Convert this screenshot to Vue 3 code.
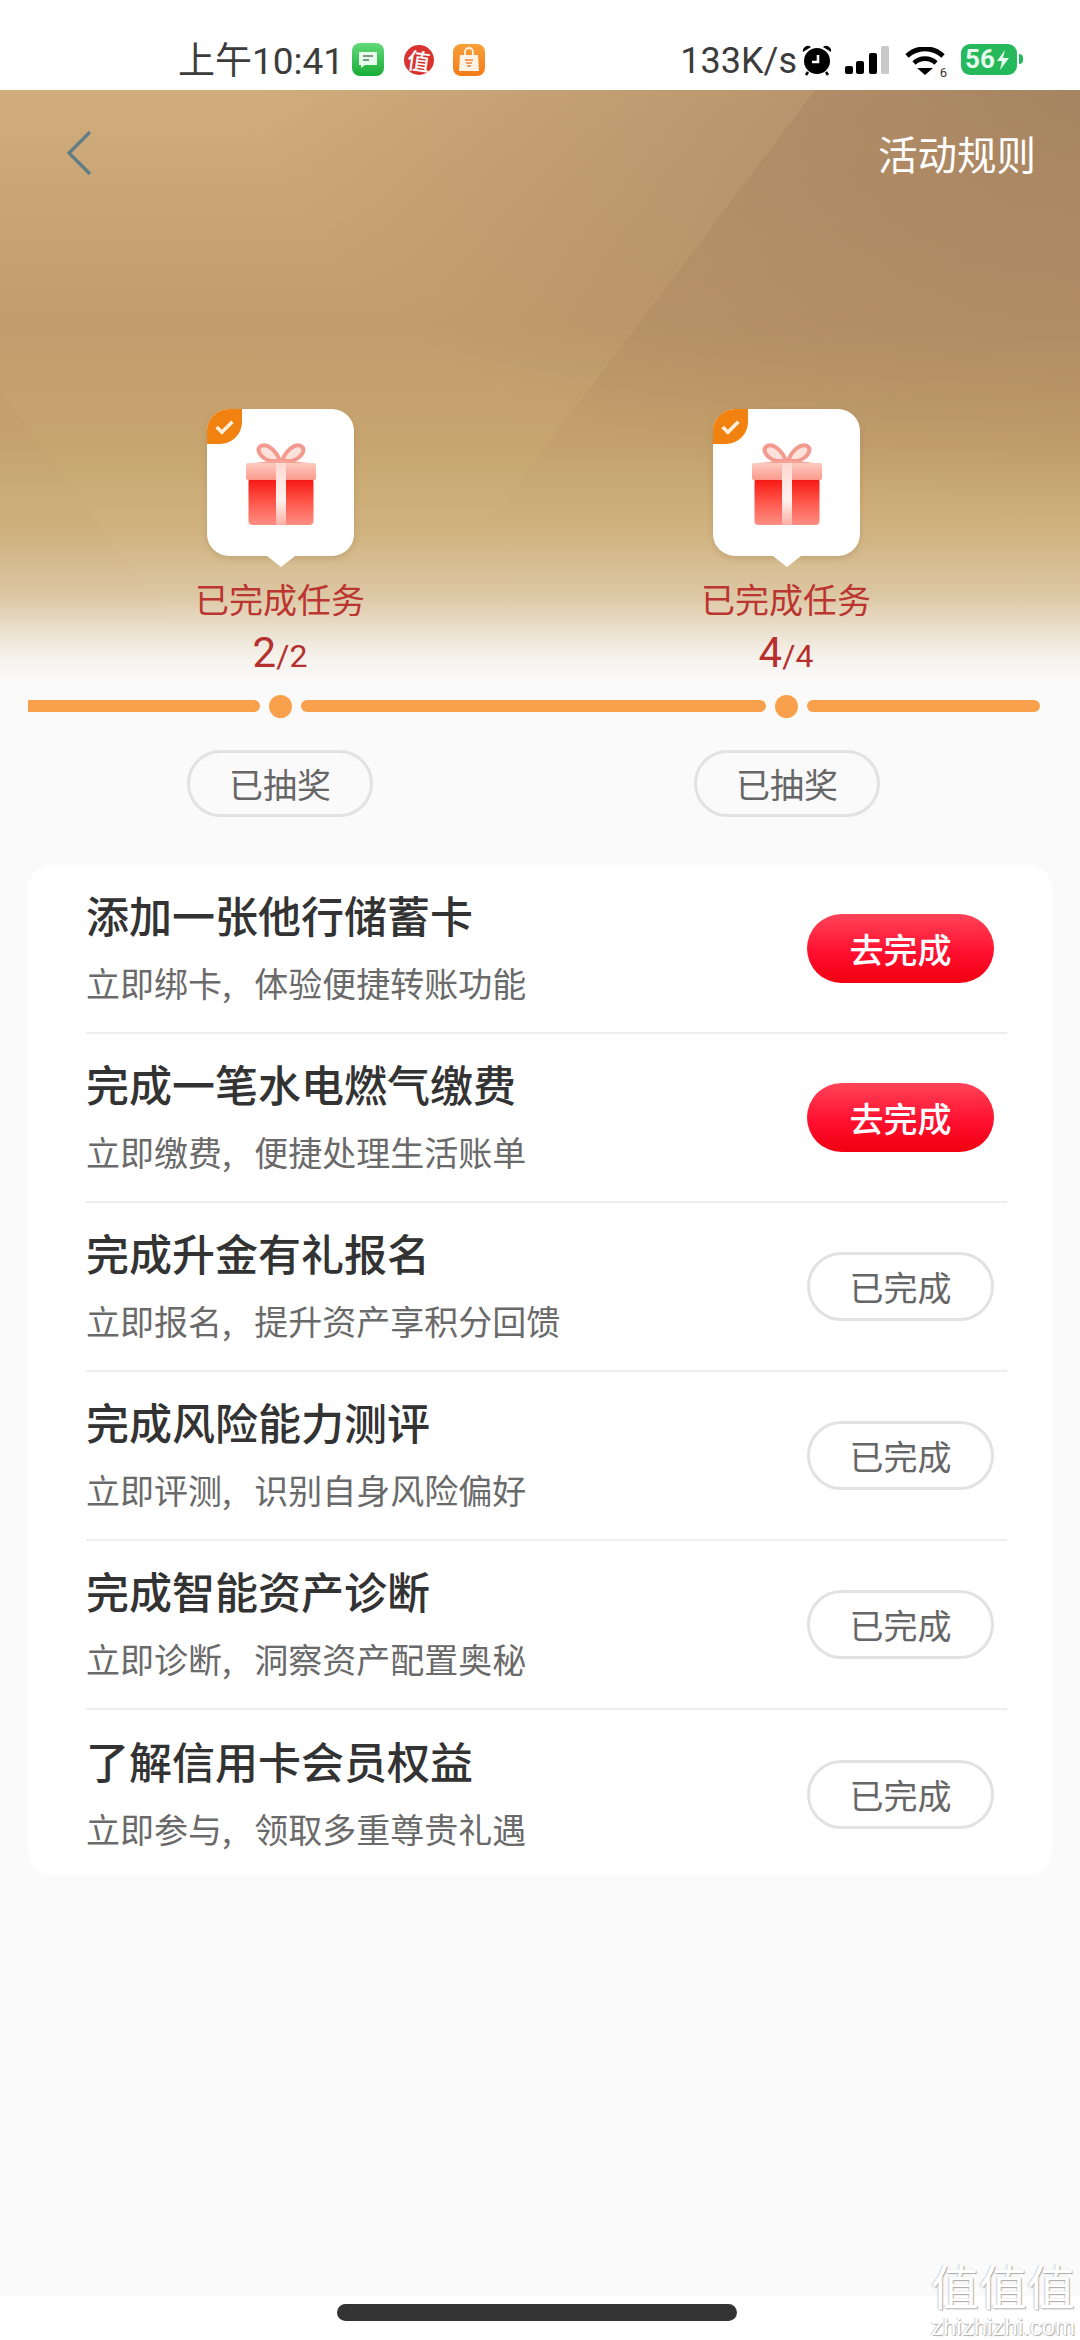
<script setup>
const milestones = [
  { done: '2', total: '2' },
  { done: '4', total: '4' },
]
const tasks = [
  { title: '添加一张他行储蓄卡', sub: '立即绑卡,   体验便捷转账功能', done: false },
  { title: '完成一笔水电燃气缴费', sub: '立即缴费,   便捷处理生活账单', done: false },
  { title: '完成升金有礼报名', sub: '立即报名,   提升资产享积分回馈', done: true },
  { title: '完成风险能力测评', sub: '立即评测,   识别自身风险偏好', done: true },
  { title: '完成智能资产诊断', sub: '立即诊断,   洞察资产配置奥秘', done: true },
  { title: '了解信用卡会员权益', sub: '立即参与,   领取多重尊贵礼遇', done: true },
]
</script>

<template>
  <div class="page">
    <header class="status">
      <div class="status-left">
        <span class="time">上午10:41</span>
        <svg class="ic-msg" width="32" height="33" viewBox="0 0 32 33">
          <defs>
            <linearGradient id="msgG" x1="0" y1="0" x2="0" y2="1">
              <stop offset="0" stop-color="#62d977" />
              <stop offset="1" stop-color="#18ad38" />
            </linearGradient>
          </defs>
          <rect width="32" height="33" rx="8" fill="url(#msgG)" />
          <path d="M7 9h18v13H13l-4 3v-3H7z" fill="#eafbee" />
          <path d="M11 13h10M11 17h6" stroke="#4d7f62" stroke-width="1.6" />
        </svg>
        <span class="zhi"><em>值</em></span>
        <svg class="ic-bag" width="32" height="32" viewBox="0 0 32 32">
          <defs>
            <linearGradient id="bagG" x1="0" y1="0" x2="0" y2="1">
              <stop offset="0" stop-color="#f8a13a" />
              <stop offset="1" stop-color="#f37a17" />
            </linearGradient>
          </defs>
          <rect width="32" height="32" rx="8" fill="url(#bagG)" />
          <path d="M7 11h18l1 16H6z" fill="#fdf3e4" />
          <path d="M12 12V8a4 4 0 0 1 8 0v4" fill="none" stroke="#fdf3e4" stroke-width="1.8" />
          <path d="M12 16h8M13 19h6M14 22h4" stroke="#e9823a" stroke-width="1.3" />
        </svg>
      </div>
      <div class="status-right">
        <span class="speed">133K/s</span>
        <svg class="ic-alarm" width="30" height="32" viewBox="0 0 30 32">
          <circle cx="15" cy="17" r="13" fill="#000" />
          <path d="M1 8a5 5 0 0 1 8-5zM29 8a5 5 0 0 0-8-5z" fill="#000" />
          <path d="M6 28l-2 3M24 28l2 3" stroke="#000" stroke-width="2.6" />
          <path d="M16 11v7H10" fill="none" stroke="#fff" stroke-width="2.6" />
        </svg>
        <svg class="ic-signal" width="44" height="28" viewBox="0 0 44 28">
          <rect x="0" y="20" width="8" height="8" rx="2" fill="#000" />
          <rect x="11" y="15" width="8" height="13" rx="2" fill="#000" />
          <rect x="24" y="7" width="8" height="21" rx="2" fill="#000" />
          <rect x="36" y="0" width="8" height="28" rx="1.5" fill="#c9c9c9" />
        </svg>
        <span class="wifi">
          <svg width="40" height="28" viewBox="0 0 40 28">
            <path d="M2 9a26 26 0 0 1 36 0" fill="none" stroke="#000" stroke-width="4.8" />
            <path d="M9 16a16 16 0 0 1 22 0" fill="none" stroke="#000" stroke-width="4.6" />
            <path d="M12 21h16l-8 7z" fill="#000" />
          </svg>
          <i class="wifi-six">6</i>
        </span>
        <span class="battery">
          <b>56</b>
          <svg width="12" height="20" viewBox="0 0 12 20"><path d="M8 0L0 11h5l-2 9 9-12H6z" fill="#e8fbee" /></svg>
          <i class="nub"></i>
        </span>
      </div>
    </header>

    <main class="main">
      <section class="hero">
        <div class="hero-bar">
          <svg class="back" width="26" height="46" viewBox="0 0 26 46">
            <path d="M24 2L3 23l21 21" fill="none" stroke="#5f7c88" stroke-width="3.2" />
          </svg>
          <span class="rules">活动规则</span>
        </div>
        <div class="miles">
          <div v-for="(m, i) in milestones" :key="i" class="mile">
            <div class="gift-card">
              <span class="check">
                <svg width="24" height="18" viewBox="0 0 24 18">
                  <path d="M3 9l6 6L21 3" fill="none" stroke="#fff0dd" stroke-width="4" />
                </svg>
              </span>
              <svg class="gift" width="70" height="83" viewBox="0 0 70 83">
                <defs>
                  <linearGradient :id="'lid' + i" x1="0" y1="0" x2="0" y2="1">
                    <stop offset="0" stop-color="#fccabf" />
                    <stop offset="1" stop-color="#fb9a8c" />
                  </linearGradient>
                  <linearGradient :id="'box' + i" x1="0" y1="0" x2="0" y2="1">
                    <stop offset="0" stop-color="#f5140f" />
                    <stop offset=".45" stop-color="#ff4f43" />
                    <stop offset="1" stop-color="#fd8f84" />
                  </linearGradient>
                  <linearGradient :id="'rib' + i" x1="0" y1="0" x2="0" y2="1">
                    <stop offset="0" stop-color="#fcd9d2" />
                    <stop offset=".6" stop-color="#fff1ee" />
                    <stop offset="1" stop-color="#fcaea4" />
                  </linearGradient>
                </defs>
                <path d="M34 18C30 7 21 0 15 3 10 6 13 14 24 18zM36 18C40 7 49 0 55 3c5 3 2 11-9 15z" fill="#fde2dc" stroke="#f39a8f" stroke-width="4" />
                <path d="M7 20l28-3 28 3z" fill="#f6a398" />
                <rect x="2.5" y="35" width="65" height="47" rx="4" :fill="'url(#box' + i + ')'" />
                <rect x="0" y="20" width="70" height="17" rx="2" :fill="'url(#lid' + i + ')'" />
                <rect x="30" y="20" width="10" height="62" :fill="'url(#rib' + i + ')'" />
              </svg>
            </div>
            <div class="mile-label">已完成任务</div>
            <div class="mile-count">{{ m.done }}<small>/{{ m.total }}</small></div>
          </div>
        </div>
      </section>

      <div class="track">
        <i class="seg seg-a"></i><i class="dot"></i>
        <i class="seg seg-b"></i><i class="dot"></i>
        <i class="seg seg-c"></i>
      </div>

      <div class="draws">
        <span v-for="i in 2" :key="i" class="pill draw">已抽奖</span>
      </div>

      <section class="card">
        <div v-for="t in tasks" :key="t.title" class="row">
          <div class="row-text">
            <div class="row-title">{{ t.title }}</div>
            <div class="row-sub">{{ t.sub }}</div>
          </div>
          <span v-if="t.done" class="pill task-done">已完成</span>
          <span v-else class="task-go">去完成</span>
        </div>
      </section>
    </main>

    <footer class="foot"><i class="home"></i></footer>

    <div class="mark">
      <div class="mark-zh">值值值</div>
      <div class="mark-en">zhizhizhi.com</div>
    </div>
  </div>
</template>

<style scoped>
.page {
  position: relative;
  width: 1080px;
  height: 2340px;
  display: flex;
  flex-direction: column;
  overflow: hidden;
  background: #fff;
  font-family: "Noto Sans CJK SC", "Noto Sans", sans-serif;
}
.status {
  height: 90px;
  box-sizing: border-box;
  padding: 43px 57px 0 178px;
  display: flex;
  justify-content: space-between;
  background: #fff;
}
.status-left,
.status-right {
  height: 33px;
  display: flex;
  align-items: center;
  color: #3c3c3c;
  font: 37px/33px Roboto, "Noto Sans CJK SC", sans-serif;
}
.time,
.speed { padding-top: 3px; }
.speed { font-size: 36px; }
.ic-msg { margin-left: 8px; }
.zhi {
  width: 30px;
  height: 30px;
  margin-left: 20px;
  border-radius: 50%;
  background: #d9322f;
  color: #fff;
  font: 500 23px/30px "Noto Sans CJK SC", sans-serif;
  text-align: center;
}
.zhi em {
  display: block;
  font-style: normal;
  transform: rotate(8deg);
}
.ic-bag { margin-left: 19px; }
.ic-alarm { margin-left: 5px; }
.ic-signal { margin-left: 13px; }
.wifi {
  position: relative;
  margin-left: 16px;
  width: 40px;
  height: 28px;
}
.wifi-six {
  position: absolute;
  right: -2px;
  bottom: -5px;
  font: 13px/13px Roboto, sans-serif;
  color: #333;
}
.battery {
  position: relative;
  width: 56px;
  height: 31px;
  margin: 0 6px 0 16px;
  box-sizing: border-box;
  padding-left: 4px;
  display: flex;
  align-items: center;
  gap: 2px;
  border-radius: 9px;
  background: #25b95c;
  color: #e8fbee;
}
.battery b { font: 700 26px/31px Roboto, sans-serif; }
.nub {
  position: absolute;
  right: -6px;
  top: 10px;
  width: 4px;
  height: 10px;
  border-radius: 0 4px 4px 0;
  background: #25b95c;
}

.main {
  flex: 1;
  background: #fafafa;
  display: flex;
  flex-direction: column;
}
.hero {
  position: relative;
  height: 590px;
  background:
    linear-gradient(180deg, rgba(250,250,250,0) 60%, rgba(250,250,250,.1) 75%, rgba(250,250,250,.35) 86%, rgba(250,250,250,.68) 92%, rgba(250,250,250,.88) 96%, #fafafa 100%),
    radial-gradient(ellipse 820px 430px at 100% 0, rgba(125,92,70,.42), rgba(125,92,70,0)),
    linear-gradient(180deg, #d1ac7d 0%, #c19d6e 40%, #caa96f 70%, #d0b27f 100%);
}
.hero::before {
  content: "";
  position: absolute;
  inset: 0;
  clip-path: polygon(815px 0, 1080px 0, 1080px 470px, 400px 550px);
  background: linear-gradient(180deg, rgba(150,115,85,.26) 0%, rgba(160,120,85,.14) 50%, rgba(170,130,85,0) 75%);
}
.hero::after {
  content: "";
  position: absolute;
  inset: 0;
  clip-path: polygon(0 300px, 170px 530px, 0 530px);
  background: linear-gradient(180deg, rgba(165,125,85,.12), rgba(165,125,85,0));
}
.hero-bar {
  position: relative;
  z-index: 1;
  height: 46px;
  padding: 40px 44px 0 66px;
  display: flex;
  justify-content: space-between;
  align-items: center;
}
.rules {
  color: #fff;
  font-size: 39.5px;
  line-height: 44px;
}
.miles {
  position: relative;
  z-index: 1;
  margin-top: 233px;
  padding-left: 130px;
  display: flex;
  gap: 206px;
}
.mile {
  width: 300px;
  display: flex;
  flex-direction: column;
  align-items: center;
}
.gift-card {
  position: relative;
  width: 147px;
  height: 147px;
  box-sizing: border-box;
  padding: 34px 0 0 39px;
  border-radius: 22px;
  background: #fff;
  box-shadow: 0 3px 6px rgba(130, 90, 40, .2);
}
.gift-card::after {
  content: "";
  position: absolute;
  left: 60px;
  top: 147px;
  border-left: 14px solid transparent;
  border-right: 14px solid transparent;
  border-top: 11px solid #fff;
}
.gift { display: block; }
.check {
  position: absolute;
  left: 0;
  top: 0;
  width: 35px;
  height: 35px;
  display: flex;
  align-items: center;
  justify-content: center;
  border-radius: 22px 0 22px 0;
  background: #f2820f;
}
.check svg { width: 21px; height: 16px; }
.mile-label {
  margin-top: 21px;
  color: #bb3531;
  font-size: 34px;
  line-height: 44px;
}
.mile-count {
  margin-top: 10px;
  color: #b5302e;
  font: 42px/44px Roboto, sans-serif;
}
.mile-count small { font-size: 32px; }

.track {
  margin-top: 14px;
  padding-left: 28px;
  height: 24px;
  display: flex;
  align-items: center;
  gap: 9px;
}
.seg {
  display: block;
  height: 12px;
  border-radius: 6px;
  background: #f9a04c;
}
.seg-a { width: 232px; border-radius: 0 6px 6px 0; }
.seg-b { width: 465px; }
.seg-c { width: 233px; }
.dot {
  display: block;
  width: 23px;
  height: 23px;
  border-radius: 50%;
  background: #f9a04c;
}

.draws {
  margin-top: 32px;
  padding-left: 187px;
  display: flex;
  gap: 321px;
}
.pill {
  box-sizing: border-box;
  display: flex;
  align-items: center;
  justify-content: center;
  border: 3px solid #e2e2e2;
  color: #666;
  font-size: 34px;
}
.draw {
  width: 186px;
  height: 67px;
  border-radius: 34px;
}

.card {
  margin: 48px 28px 0;
  height: 1010px;
  border-radius: 24px;
  background: #fff;
  overflow: hidden;
}
.row {
  height: 169px;
  box-sizing: border-box;
  margin: 0 45px 0 58px;
  padding-right: 13px;
  display: flex;
  justify-content: space-between;
  align-items: center;
  border-bottom: 2px solid #eeeeee;
}
.row:last-child { border-bottom: 0; }
.row-title {
  color: #333;
  font-size: 43px;
  font-weight: 500;
  line-height: 44px;
}
.row-sub {
  margin-top: 25px;
  color: #6a6a6a;
  font-size: 34px;
  line-height: 44px;
  white-space: pre;
}
.task-go,
.task-done {
  flex: none;
  width: 187px;
  height: 69px;
  border-radius: 35px;
  font-size: 34px;
}
.task-go {
  display: flex;
  align-items: center;
  justify-content: center;
  color: #fff;
  font-weight: 500;
  background: linear-gradient(180deg, #ff4358 0%, #ff1030 55%, #f00010 100%);
}

.foot {
  height: 44px;
  box-sizing: border-box;
  padding-top: 8px;
  display: flex;
  justify-content: center;
  background: #fff;
}
.home {
  display: block;
  width: 400px;
  height: 17px;
  margin-right: 7px;
  border-radius: 9px;
  background: #333;
}
.mark {
  position: absolute;
  left: 929px;
  top: 2254px;
  width: 148px;
  color: #fff;
  text-align: center;
  text-shadow: 1px 1px 1px #a9a9a9, -1px 0 1px #cfcfcf;
}
.mark-zh { font-size: 48px; line-height: 60px; }
.mark-en { font: 24px/26px "Liberation Sans", sans-serif; white-space: nowrap; }
</style>

<style>
html, body { margin: 0; background: #fff; }
</style>
